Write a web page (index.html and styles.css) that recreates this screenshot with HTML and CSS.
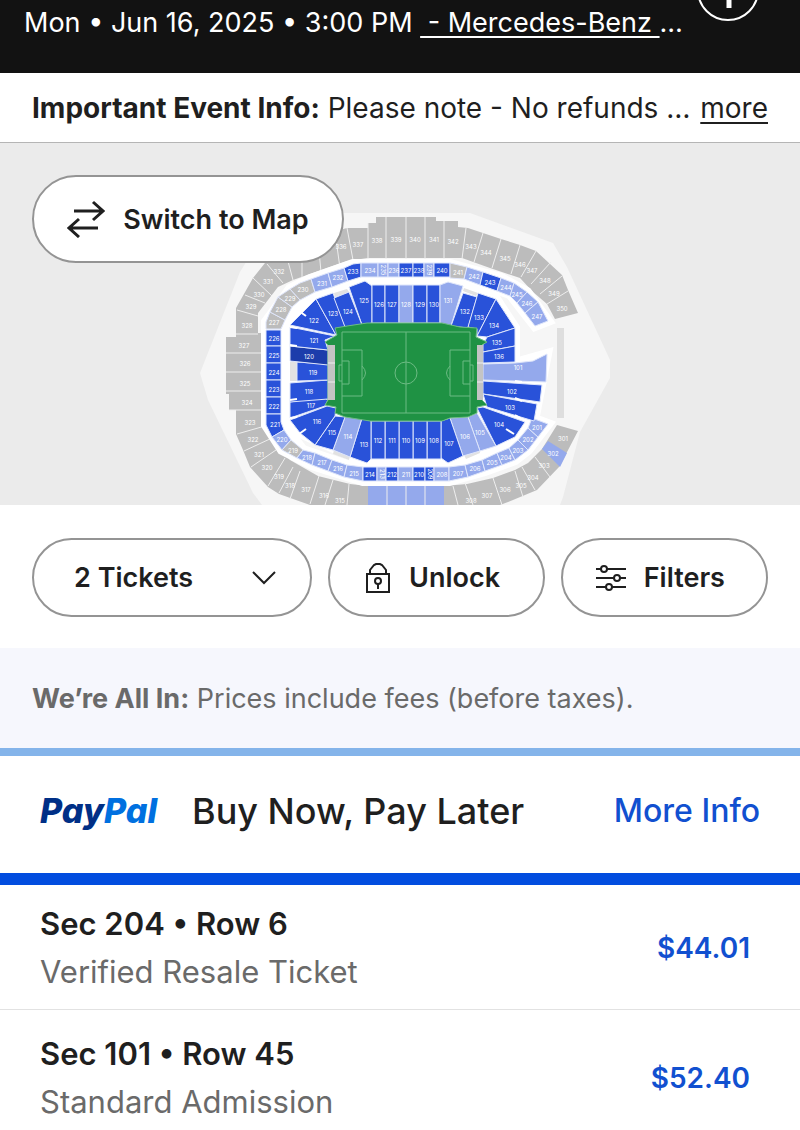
FILE: index.html
```html
<!DOCTYPE html>
<html lang="en">
<head>
  <meta charset="UTF-8">
  <meta name="viewport" content="width=device-width, initial-scale=1">
  <title>Tickets</title>
  <link rel="stylesheet" href="styles.css">
</head>
<body>

  <header class="event-header">
    <p class="event-date">Mon • Jun 16, 2025 • 3:00 PM <a href="#venue">&nbsp;- Mercedes-Benz&nbsp;</a>…</p>
    <button class="info-button" type="button" aria-label="Event details">
      <svg viewBox="0 0 64 64" aria-hidden="true">
        <circle cx="32" cy="32" r="30" />
        <path d="M33 28v22" />
      </svg>
    </button>
  </header>

  <div class="event-info">
    <p><strong>Important Event Info:</strong> Please note - No refunds …</p>
    <a href="#info">more</a>
  </div>

  <section class="map">
    <svg id="seatMap" class="seat-map" viewBox="0 143 800 362" role="img" aria-label="Seat map">
      <path class="venue" d="M200 373L240 272 262 236 343 213H470L553 243 567 267 610 360V378L580 432 563 497 560 505H262L253 493 208 400Z" />
      <path class="bar" d="M557 328h7v90h-7z" />
      <path class="grey" d="M226 337H236V308L253 278 265 263 300 240 347 228H368V223H376V217H436V221H458V227L468 228 483 233 501 239 520 245 536 251 562 275 568 290 578 313 555 319 547 304 533 292 520 278 490 268 462 258H368L347 261 293 280 278 287 258 313V333H265V425L273 440 290 460 318 476 350 484 368 486V505H310L279 494 268 487 250 467 243 450 236 434V410H229V394H226Z" />
      <path class="grey" d="M444 486L467 484 493 478 515 470 528 463 542 449 557 425 578 431 566 454 559 467 537 490 513 500 500 505H444Z" />
      <path class="light" d="M368 486h76v19h-76zM548 441L567 453 560 467 542 449Z" />
      <path class="divider" d="M347 228L353 260M368 223V259M386 217V259M406 217V259M425 217V259M444 221V259M466 228L462 259M483 233L474 262M501 239L492 268M520 245L511 274M536 251L521 277M551 262L531 284M562 276L540 294M568 291L547 304
        M318 240L321 272M335 232L340 268M285 250L293 280M302 240L302 277M267 264L283 283M253 278L272 296M245 295L265 303M237 310L258 316M236 334H258M226 353H265M226 372H265M226 391H265M229 410H265
        M237 434L265 426M244 451L272 438M251 467L276 450M268 486L285 458M279 493L293 467M290 499L300 471M310 504L319 476M325 505L333 480M347 505L349 484
        M387 486V505M406 486V505M425 486V505M453 486L458 505M465 483L473 505M493 478L502 505M515 471L523 497M522 467L535 490M535 457L550 477" />
      <path class="aisle" d="M266 322L290 289 310 279 353 264H450L501 278 527 292 548 321 535 326 510 294 464 278 450 277H361L315 292 285 320 281 329V422L303 450 347 465 363 467H449L482 460 518 440 532 418 548 424 528 450 515 460 485 471 449 481H363L312 465 282 450 266 425Z" />
      <path class="aisle" d="M290 325L316 299 365 281 372 286H440L448 282 496 299 515 328V363L547 354 534 421 525 422 496 446 448 463 441 459H371L367 463 300 433 290 420Z" />
      <path class="seatless" d="M290 362h7v19h-7zM334 293L347 289 349 292 335 297ZM464 288L478 293 476 296 463 291ZM334 450L350 456 349 460 333 454ZM464 455L479 449 480 453 466 459Z" />
      <g id="sections"></g>
      <path class="notches" d="M299 311L306 316M290 327L297 328M290 345L297 346M290 400L297 399M290 418L297 417M299 434L306 429M515 381L522 382M515 398L522 401M515 415L522 419M506 429L514 434" />
      <path class="pitch" d="M347 326L367 323H442L460 327 477 328 476 337 487 342 482 345V400L487 405 477 407V413L468 417 450 418 442 421H370L345 417 335 413 336 407 325 405 328 400V345L325 342 337 335 335 328Z" />
      <path class="bench" d="M328 345h7v55h-7zM477 345h6v55h-6z" />
      <path class="bench-line" d="M328 363h7M328 382h7M477 363h6M477 382h6" />
      <g class="lines">
        <path d="M342 332H470V413H342ZM406 332V413M342 350H362V396H342M342 361H349V384H342M342 365H339V381H342M362 366Q369 373 362 380M470 350H450V396H470M470 361H463V384H470M470 365H473V381H470M450 366Q443 373 450 380" />
        <circle cx="406" cy="373" r="11" />
      </g>
      <g id="labels"></g>
    </svg>
    <button class="pill switch-button" type="button">
      <svg class="icon-switch" viewBox="0 0 38 38" aria-hidden="true">
        <path d="M7 11H36M26 2L36 11 26 20M31 28H2M12 19L2 28 12 37" />
      </svg>
      Switch to Map
    </button>
  </section>

  <section class="filters">
    <div class="ticket-select">
      <select class="pill" aria-label="Number of tickets">
        <option>1 Ticket</option>
        <option selected>2 Tickets</option>
        <option>3 Tickets</option>
        <option>4 Tickets</option>
      </select>
      <svg class="icon-chevron" viewBox="0 0 24 14" aria-hidden="true">
        <path d="M1 1L12 12 23 1" />
      </svg>
    </div>
    <button class="pill filter-button" type="button">
      <svg class="icon-lock" viewBox="0 0 26 32" aria-hidden="true">
        <path d="M2 12H24V30H2ZM5 12V8L9 3 11 2H15L17 3 21 8V12M13 22V27" />
        <circle cx="13" cy="19" r="3" />
      </svg>
      Unlock
    </button>
    <button class="pill filter-button" type="button">
      <svg class="icon-filters" viewBox="0 0 30 26" aria-hidden="true">
        <path d="M0 4H5M11 4H30M0 13H18M24 13H30M0 22H10M16 22H30" />
        <circle cx="8" cy="4" r="3" />
        <circle cx="21" cy="13" r="3" />
        <circle cx="13" cy="22" r="3" />
      </svg>
      Filters
    </button>
  </section>

  <p class="all-in"><strong>We’re All In:</strong> Prices include fees (before taxes).</p>

  <section class="paypal">
    <span class="paypal-logo">Pay<span>Pal</span></span>
    <h2>Buy Now, Pay Later</h2>
    <a href="#paypal">More Info</a>
  </section>

  <ul class="tickets">
    <li>
      <div>
        <h3>Sec 204 • Row 6</h3>
        <p>Verified Resale Ticket</p>
      </div>
      <span class="price">$44.01</span>
    </li>
    <li>
      <div>
        <h3>Sec 101 • Row 45</h3>
        <p>Standard Admission</p>
      </div>
      <span class="price">$52.40</span>
    </li>
  </ul>

  <script src="map.js"></script>
</body>
</html>
```
FILE: styles.css
```css
body {
  font-family: Inter, "Liberation Sans", sans-serif;
  margin: 0;
  background-color: white;
  color: #1f1f1f;
  font-size: 27px;
  line-height: 32px;
}

h2, h3, p, ul {
  margin: 0;
  padding: 0;
}

button, select {
  font-family: inherit;
  color: inherit;
}

svg {
  flex: none;
  fill: none;
  stroke: #1f1f1f;
  stroke-width: 2;
}

/* Header */
.event-header {
  position: relative;
  overflow: hidden;
  background-color: #121212;
  color: white;
  height: 73px;
}

.event-date {
  padding: 7px 24px;
  white-space: nowrap;
}

.event-date a {
  color: white;
  text-underline-offset: 4px;
}

.info-button {
  position: absolute;
  top: -42px;
  right: 40px;
  width: 64px;
  height: 64px;
  padding: 0;
  border: none;
  background: none;
}

.info-button svg {
  display: block;
  stroke: white;
}

.info-button path {
  stroke-width: 5;
}

.event-info {
  display: flex;
  justify-content: space-between;
  padding: 19px 32px 18px;
  border-bottom: 1px solid #b5b5b5;
  font-size: 28px;
  white-space: nowrap;
}

.event-info a {
  color: inherit;
  text-underline-offset: 4px;
}

/* Seat map */
.map {
  position: relative;
  background-color: #ebebeb;
}

.seat-map {
  display: block;
  width: 100%;
  stroke: none;
}

.seat-map .venue { fill: #f6f6f6; }
.seat-map .bar { fill: #dedede; }
.seat-map .grey { fill: #bcbcbc; }
.seat-map .light { fill: #94a9ec; }
.seat-map .blue { fill: #2952d9; }
.seat-map .dark { fill: #1c3dab; }
.seat-map .pitch { fill: #1f9244; }
.seat-map .bench { fill: #c4c4c4; }
.seat-map .seatless { fill: #e2e2e2; }

.seat-map .divider,
.seat-map .bench-line {
  stroke: #eeeeee;
  stroke-width: 1;
}

.seat-map .notches {
  stroke: white;
  stroke-width: 2;
}

.seat-map .aisle {
  fill: white;
  stroke: white;
  stroke-width: 10;
}

.seat-map polygon {
  stroke: #dfe6fb;
  stroke-width: 1;
}

.seat-map .pitch,
.seat-map .lines {
  stroke: #6dbb84;
  stroke-width: 1;
}

.seat-map text {
  fill: white;
  font-size: 6px;
  text-anchor: middle;
  dominant-baseline: central;
}

/* Buttons */
.pill {
  display: flex;
  align-items: center;
  justify-content: center;
  gap: 18px;
  box-sizing: border-box;
  width: 100%;
  height: 79px;
  border: 2px solid #949494;
  border-radius: 44px;
  background-color: white;
  font-size: 27px;
  font-weight: 600;
}

.switch-button {
  position: absolute;
  top: 32px;
  left: 32px;
  width: 312px;
  height: 88px;
}

.icon-switch {
  width: 38px;
  height: 38px;
  stroke-width: 3;
}

.filters {
  display: grid;
  grid-template-columns: 280fr 216fr 207fr;
  gap: 16px;
  padding: 33px 32px 31px;
}

.filter-button {
  padding: 0 12px 0 4px;
}

.ticket-select {
  position: relative;
}

.ticket-select select {
  appearance: none;
  padding: 0 40px;
}

.icon-chevron {
  position: absolute;
  top: 33px;
  right: 36px;
  width: 24px;
  height: 14px;
  pointer-events: none;
}

.icon-lock {
  width: 26px;
  height: 32px;
}

.icon-filters {
  width: 30px;
  height: 26px;
}

/* Banners */
.all-in {
  padding: 35px 32px 33px;
  background-color: #f6f7fd;
  color: #6a6a6a;
}

.paypal {
  display: flex;
  align-items: center;
  box-sizing: border-box;
  height: 137px;
  padding: 0 40px 8px;
  border-top: 8px solid #84b4ea;
  border-bottom: 12px solid #024ddf;
}

.paypal-logo {
  width: 152px;
  color: #002f86;
  font-size: 34px;
  font-style: italic;
  font-weight: 800;
}

.paypal-logo span {
  color: #0070e0;
}

.paypal h2 {
  flex: 1;
  font-size: 36px;
  font-weight: 500;
}

.paypal a {
  color: #1150d0;
  font-size: 32px;
  font-weight: 500;
  text-decoration: none;
}

/* Ticket list */
.tickets {
  list-style: none;
}

.tickets li {
  display: flex;
  justify-content: space-between;
  align-items: center;
  padding: 15px 50px 13px 40px;
  border-bottom: 1px solid #e2e2e2;
}

.tickets li:last-child {
  padding: 20px 50px 3px 40px;
  border-bottom: none;
}

.tickets h3 {
  font-size: 31px;
  line-height: 48px;
  font-weight: 600;
}

.tickets p {
  color: #6a6a6a;
  font-size: 31px;
  line-height: 48px;
}

.price {
  color: #1150d0;
  font-size: 28px;
  font-weight: 600;
}
```
FILE: map.js
```js
// label, colour, corners
const sections = [
  ["226", "blue", "266,330 281,330 281,346 266,346"],
  ["225", "blue", "266,346 281,346 281,363 266,363"],
  ["224", "blue", "266,363 281,363 281,380 266,380"],
  ["223", "blue", "266,380 281,380 281,397 266,397"],
  ["222", "blue", "266,397 281,397 281,414 266,414"],
  ["221", "blue", "266,414 281,414 281,422 284,430 272,437 266,425"],
  ["227", "grey", "266,329 266,322 270,312 285,320 281,329"],
  ["228", "grey", "270,312 278,297 292,307 285,320"],
  ["229", "grey", "278,297 290,289 300,300 292,307"],
  ["230", "grey", "290,289 300,283 311,279 315,292 300,300"],
  ["231", "light", "311,279 328,273 332,287 315,292"],
  ["232", "light", "328,273 344,268 348,281 332,287"],
  ["233", "blue", "344,268 353,264 361,263 361,277 348,281"],
  ["234", "light", "361,263 378,263 378,277 361,277"],
  ["235", "light", "378,263 388,263 388,277 378,277"],
  ["236", "light", "388,263 399,263 399,277 388,277"],
  ["237", "blue", "399,263 413,263 413,277 399,277"],
  ["238", "blue", "413,263 424,263 424,277 413,277"],
  ["239", "light", "424,263 434,263 434,277 424,277"],
  ["240", "blue", "434,263 450,263 450,277 434,277"],
  ["241", "grey", "450,263 467,267 464,279 450,278"],
  ["242", "light", "467,267 483,272 480,285 464,279"],
  ["243", "blue", "483,272 501,278 497,291 480,285"],
  ["244", "light", "501,278 514,283 510,296 497,291"],
  ["245", "light", "514,283 527,292 517,303 510,296"],
  ["246", "light", "527,292 538,302 525,313 517,303"],
  ["247", "light", "538,302 548,321 535,326 525,313"],
  ["220", "light", "272,437 284,430 291,440 282,450"],
  ["219", "grey", "282,450 291,440 303,450 297,458"],
  ["218", "light", "297,458 303,450 315,453 312,465"],
  ["217", "light", "312,465 315,453 332,460 328,471"],
  ["216", "light", "328,471 332,460 347,465 344,477"],
  ["215", "light", "344,477 347,465 363,467 363,481"],
  ["214", "blue", "363,467 377,467 377,481 363,481"],
  ["213", "light", "377,467 386,467 386,481 377,481"],
  ["212", "blue", "386,467 398,467 398,481 386,481"],
  ["211", "light", "398,467 413,467 413,481 398,481"],
  ["210", "blue", "413,467 425,467 425,481 413,481"],
  ["209", "blue", "425,467 434,467 434,481 425,481"],
  ["208", "light", "434,467 449,467 449,481 434,481"],
  ["207", "light", "449,467 465,465 468,477 449,481"],
  ["206", "light", "465,465 482,460 485,471 468,477"],
  ["205", "light", "482,460 497,453 502,465 485,471"],
  ["204", "light", "497,453 509,448 515,460 502,465"],
  ["203", "light", "509,448 518,440 528,450 515,460"],
  ["202", "light", "518,440 528,428 538,437 528,450"],
  ["201", "light", "528,428 532,418 548,424 538,437"],
  ["125", "blue", "349,287 365,281 372,286 372,323 362,325"],
  ["126", "blue", "372,285 385,285 385,323 372,323"],
  ["127", "blue", "385,285 399,285 399,323 385,323"],
  ["128", "light", "399,285 413,285 413,323 399,323"],
  ["129", "blue", "413,285 427,285 427,323 413,323"],
  ["130", "blue", "427,285 440,285 440,323 427,323"],
  ["131", "light", "440,285 448,282 463,286 451,326 440,323"],
  ["132", "blue", "463,293 477,297 468,328 451,326"],
  ["133", "blue", "478,293 496,299 477,336 477,329 468,327"],
  ["134", "blue", "496,299 515,328 487,337 477,336"],
  ["135", "blue", "487,337 515,328 515,346 483,352 483,345"],
  ["136", "blue", "483,352 515,346 515,362 483,363"],
  ["101", "light", "483,364 515,363 533,361 547,354 546,382 483,380"],
  ["102", "blue", "483,381 542,385 540,402 483,394"],
  ["103", "blue", "483,394 537,404 534,421 487,407"],
  ["104", "blue", "477,408 483,407 525,422 515,437 496,446"],
  ["105", "light", "468,417 477,413 496,446 480,451"],
  ["106", "light", "450,418 468,417 480,451 463,456"],
  ["107", "blue", "441,421 450,418 463,456 448,463 441,458"],
  ["108", "blue", "427,421 441,421 441,459 427,459"],
  ["109", "blue", "413,421 427,421 427,459 413,459"],
  ["110", "blue", "399,421 413,421 413,459 399,459"],
  ["111", "blue", "385,421 399,421 399,459 385,459"],
  ["112", "blue", "371,421 385,421 385,459 371,459"],
  ["113", "blue", "362,418 371,421 371,459 367,463 350,457"],
  ["114", "light", "345,417 362,418 350,457 333,450"],
  ["115", "blue", "335,416 345,417 333,450 315,445"],
  ["116", "blue", "290,420 327,406 336,408 335,416 315,445 300,433"],
  ["117", "blue", "290,418 290,402 323,397 328,400 325,406"],
  ["118", "blue", "290,402 290,383 328,380 328,399"],
  ["119", "blue", "297,381 297,362 328,364 328,380"],
  ["120", "dark", "290,346 328,350 328,365 290,361"],
  ["121", "blue", "290,346 290,327 335,336 325,340 328,350"],
  ["122", "blue", "290,325 316,299 336,335"],
  ["123", "blue", "316,299 333,293 345,326 336,335"],
  ["124", "blue", "334,298 349,292 362,325 345,327"]
];

// upper ring only has labels, its shapes are in the page
const upperLabels = [
  [332, 279, 271], [331, 268, 281], [330, 259, 294], [329, 251, 306],
  [328, 247, 325], [327, 244, 345], [326, 245, 363], [325, 245, 383],
  [324, 247, 402], [323, 250, 422], [322, 253, 439], [321, 259, 454],
  [320, 267, 467], [319, 279, 476], [318, 290, 485], [317, 306, 489],
  [316, 324, 495], [315, 340, 500], [336, 341, 246], [337, 358, 244],
  [338, 377, 240], [339, 396, 239], [340, 415, 239], [341, 434, 239],
  [342, 453, 241], [343, 471, 246], [344, 486, 252], [345, 505, 258],
  [346, 520, 264], [347, 532, 270], [348, 545, 280], [349, 554, 293],
  [350, 562, 308], [301, 563, 438], [302, 553, 453], [303, 544, 465],
  [304, 533, 477], [305, 521, 485], [306, 505, 489], [307, 487, 495],
  [308, 471, 500]
];

// too narrow for a horizontal label
const rotated = ["235", "239", "213", "209"];

let shapes = "";
let labels = "";

for (const [label, color, points] of sections) {
  const corners = points.split(" ").map(p => p.split(",").map(Number));
  const x = Math.round(corners.reduce((sum, c) => sum + c[0], 0) / corners.length);
  const y = Math.round(corners.reduce((sum, c) => sum + c[1], 0) / corners.length);
  const turn = rotated.includes(label) ? ` transform="rotate(90 ${x} ${y})"` : "";
  shapes += `<polygon class="${color}" points="${points}" />`;
  labels += `<text x="${x}" y="${y}"${turn}>${label}</text>`;
}

for (const [label, x, y] of upperLabels) {
  labels += `<text x="${x}" y="${y}">${label}</text>`;
}

document.getElementById("sections").innerHTML = shapes;
document.getElementById("labels").innerHTML = labels;
```
